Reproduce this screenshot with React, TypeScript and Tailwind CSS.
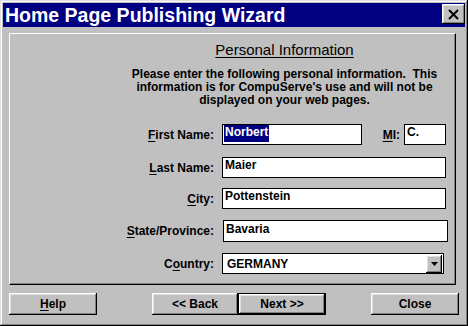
import React from 'react';

const raised =
  'bg-[#c0c0c0] shadow-[inset_-1px_-1px_0_#000,inset_1px_1px_0_#fff,inset_-2px_-2px_0_#808080,inset_2px_2px_0_#dfdfdf]';

function Field({ width, tall, children }: { width: string; tall?: boolean; children?: React.ReactNode }) {
  return (
    <div
      className={`${width} ${tall ? 'h-[22px]' : 'h-[21px]'} bg-white border border-black flex items-start pl-[1px] text-[12px] font-bold leading-[15px]`}
    >
      {children}
    </div>
  );
}

function Label({ ul, rest, pre = '' }: { ul: string; rest: string; pre?: string }) {
  return (
    <span>
      {pre}
      <span className="underline underline-offset-2">{ul}</span>
      {rest}
    </span>
  );
}

export default function App() {
  return (
    <div className="w-[468px] h-[326px] bg-[#c0c0c0] p-[3px] flex flex-col text-black font-['Liberation_Sans',Arial,sans-serif] shadow-[inset_-1px_-1px_0_#000,inset_1px_1px_0_#dfdfdf,inset_-2px_-2px_0_#808080,inset_2px_2px_0_#fff]">
      {/* Title bar */}
      <div className="h-[24px] bg-[#000080] flex items-start justify-between">
        <span className="text-white font-bold text-[19.5px] leading-[24px] pl-[2px]">
          Home Page Publishing Wizard
        </span>
        <div className={`mt-[1px] w-[23px] h-[20px] flex items-center justify-center ${raised}`}>
          <svg width="11" height="11" viewBox="0 0 11 11">
            <path d="M1 1 L10 10 M10 1 L1 10" stroke="#000" strokeWidth="2" />
          </svg>
        </div>
      </div>

      {/* Panel */}
      <div className="ml-[6px] mt-[6px] w-[447px] h-[252px] border-t border-l border-white border-r border-b border-r-black border-b-black shadow-[inset_-1px_-1px_0_#808080]">
        <div className="flex">
          <div className="w-[104px] shrink-0" />
          <div className="flex-1 text-center pt-[8px]">
            <div className="text-[15px] leading-[16px] underline underline-offset-2">Personal Information</div>
            <p className="mt-[10px] text-[12px] leading-[13px] font-bold">
              Please enter the following personal information.{'\u00a0 '}This
              <br />
              information is for CompuServe's use and will not be
              <br />
              displayed on your web pages.
            </p>
          </div>
        </div>

        <div className="mt-[17px] flex flex-col text-[12px] leading-[14px] font-bold">
          <div className="flex items-center">
            <div className="w-[204px] text-right">
              <Label ul="F" rest="irst Name:" />
            </div>
            <div className="ml-[8px]">
              <Field width="w-[140px]">
                <span className="bg-[#000080] text-white pb-[2px] px-[1px]">Norbert</span>
              </Field>
            </div>
            <div className="w-[38px] text-right">
              <Label ul="M" rest="I:" />
            </div>
            <div className="ml-[4px]">
              <Field width="w-[42px]">
                <span className="pl-[1px]">C.</span>
              </Field>
            </div>
          </div>

          <div className="flex items-center mt-[12px]">
            <div className="w-[204px] text-right">
              <Label ul="L" rest="ast Name:" />
            </div>
            <div className="ml-[8px]">
              <Field width="w-[224px]">
                <span className="pl-[1px]">Maier</span>
              </Field>
            </div>
          </div>

          <div className="flex items-center mt-[10px]">
            <div className="w-[204px] text-right">
              <Label ul="C" rest="ity:" />
            </div>
            <div className="ml-[8px]">
              <Field width="w-[224px]">
                <span className="pl-[1px]">Pottenstein</span>
              </Field>
            </div>
          </div>

          <div className="flex items-center mt-[11px]">
            <div className="w-[204px] text-right">
              <Label ul="S" rest="tate/Province:" />
            </div>
            <div className="ml-[9px]">
              <Field width="w-[225px]" tall>
                <span className="pl-[1px] pt-[1px]">Bavaria</span>
              </Field>
            </div>
          </div>

          <div className="flex items-center mt-[11px]">
            <div className="w-[204px] text-right">
              <Label pre="C" ul="o" rest="untry:" />
            </div>
            <div className="ml-[8px] w-[222px] h-[21px] bg-white border border-black flex items-center justify-between">
              <span className="pl-[4px]">GERMANY</span>
              <div className={`mr-[1px] w-[16px] h-[18px] flex items-center justify-center ${raised}`}>
                <svg width="7" height="4" viewBox="0 0 7 4">
                  <path d="M0 0 H7 L3.5 4 Z" fill="#000" />
                </svg>
              </div>
            </div>
          </div>
        </div>
      </div>

      {/* Buttons */}
      <div className="mt-[8px] flex text-[12px] leading-[14px] font-bold">
        <div className={`ml-[6px] w-[88px] h-[22px] flex items-center justify-center ${raised}`}>
          <span>
            <span className="underline underline-offset-2">H</span>elp
          </span>
        </div>
        <div className={`ml-[55px] w-[86px] h-[22px] flex items-center justify-center ${raised}`}>
          {'<< Back'}
        </div>
        <div className="w-[88px] h-[22px] border border-black">
          <div className={`w-full h-full flex items-center justify-center ${raised}`}>{'Next >>'}</div>
        </div>
        <div className={`ml-[45px] w-[88px] h-[22px] flex items-center justify-center ${raised}`}>
          Close
        </div>
      </div>
    </div>
  );
}
